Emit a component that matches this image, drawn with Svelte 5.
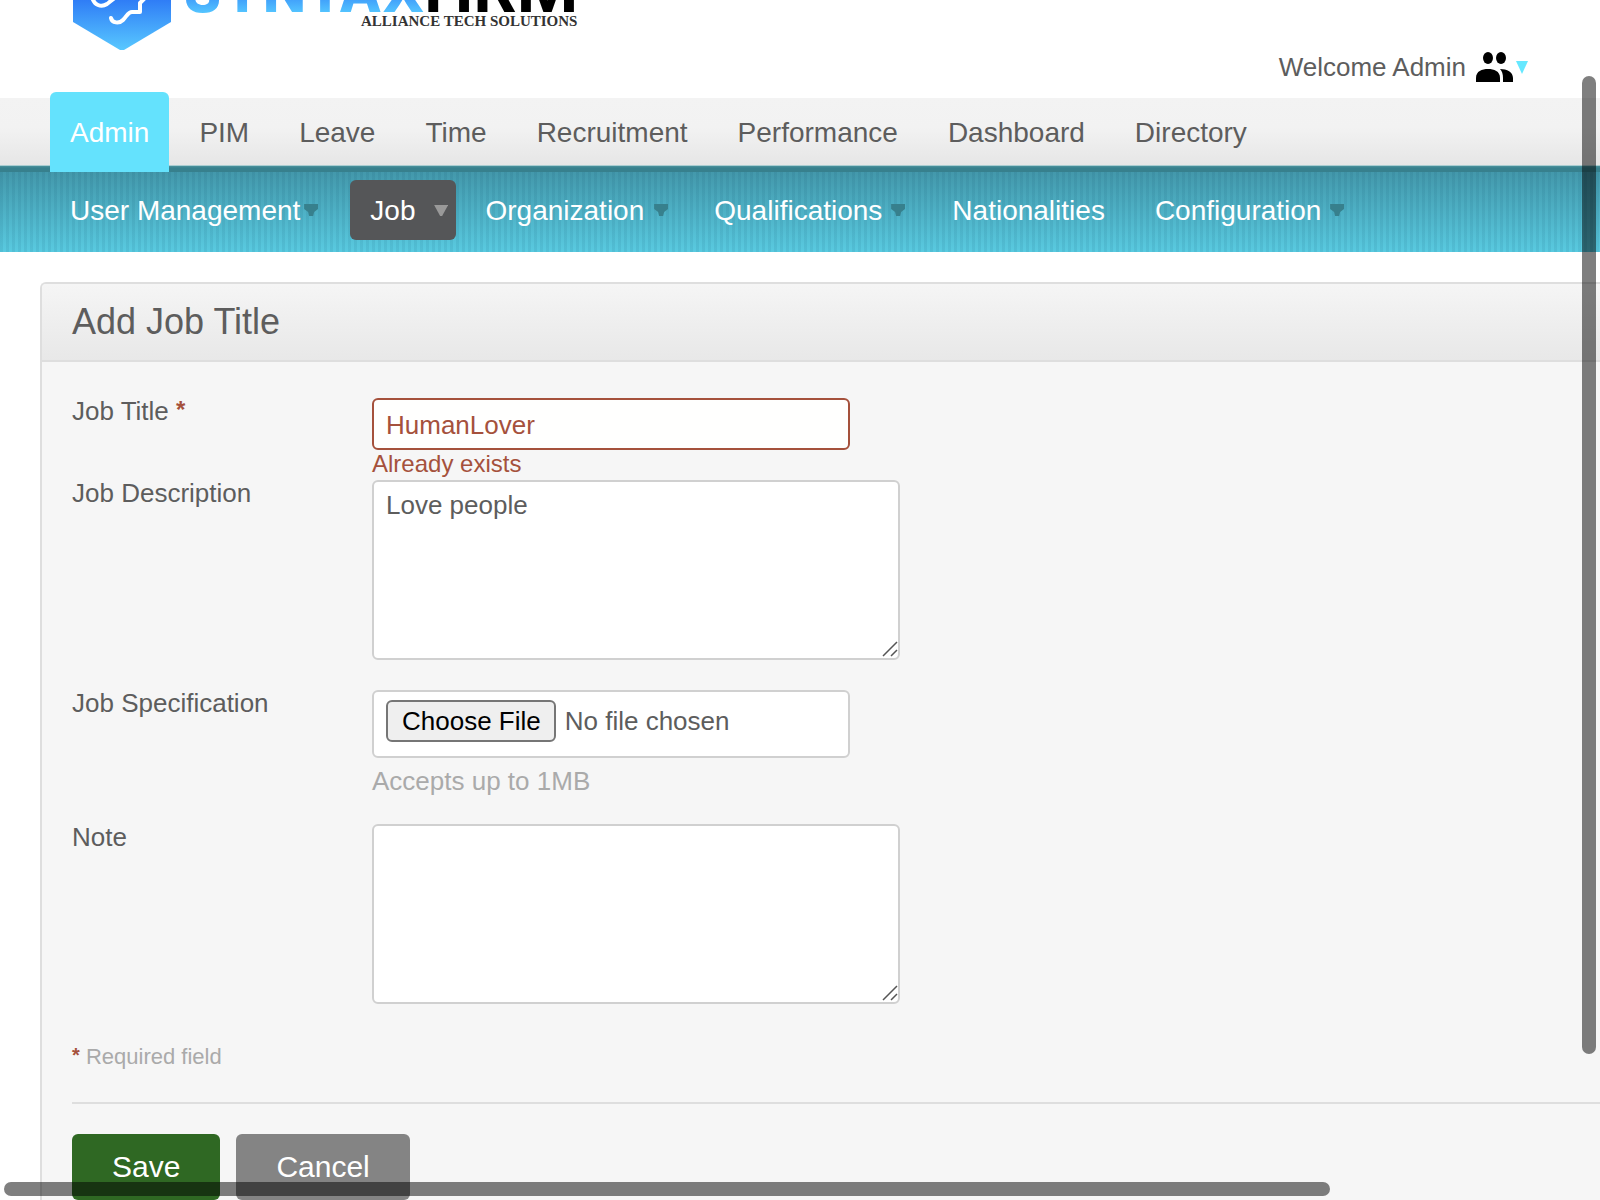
<script>
  const modules = ['Admin', 'PIM', 'Leave', 'Time', 'Recruitment', 'Performance', 'Dashboard', 'Directory'];
  const sections = [
    { name: 'User Management', menu: true },
    { name: 'Job', menu: true, current: true },
    { name: 'Organization', menu: true },
    { name: 'Qualifications', menu: true },
    { name: 'Nationalities' },
    { name: 'Configuration', menu: true }
  ];
  let title = $state('HumanLover');
  let description = $state('Love people');
  let note = $state('');
</script>

{#snippet grip()}
  <svg class="grip" viewBox="0 0 16 16" aria-hidden="true"><path d="M1 15L15 1M9 15L15 9" /></svg>
{/snippet}

<div class="page">
  <header>
    <svg class="logo" viewBox="0 0 540 52" role="img" aria-label="SyntaxHRM Alliance Tech Solutions">
      <defs>
        <linearGradient id="hex" gradientUnits="userSpaceOnUse" x1="0" y1="0" x2="0" y2="50">
          <stop offset="0" stop-color="#2f7df6" />
          <stop offset="1" stop-color="#58c8ff" />
        </linearGradient>
        <linearGradient id="word" gradientUnits="userSpaceOnUse" x1="0" y1="-14" x2="0" y2="12">
          <stop offset="0" stop-color="#2f7df6" />
          <stop offset="1" stop-color="#53c3ff" />
        </linearGradient>
      </defs>
      <path d="M1 -40H99V22L52 50H48L1 22Z" fill="url(#hex)" />
      <path d="M20 -3C22 5 29 8 35 4C39 1 42 -2 47 -5M39 18C40 23 47 24 51 20C55 16 56 12 60 12H68V3L75 -4" fill="none" stroke="#fff" stroke-width="4" stroke-linecap="round" stroke-linejoin="round" />
      <text x="112" y="12" class="word" fill="url(#word)">SYNTAX</text>
      <text x="352" y="12" class="word wide" fill="#000">HRM</text>
      <text x="289" y="26" class="tag">ALLIANCE TECH SOLUTIONS</text>
    </svg>
    <button class="welcome" type="button">
      Welcome Admin
      <svg class="people" viewBox="0 0 38 30" aria-hidden="true">
        <ellipse cx="12" cy="6" rx="5" ry="6" />
        <ellipse cx="25" cy="6" rx="5" ry="6" />
        <path d="M0 30V26C0 19 6 17 12 17S24 19 24 26V30Z" />
        <path d="M24 17C31 17 37 20 37 26V30H27V26C27 22 26 19 24 17Z" />
      </svg>
      <svg class="caret" viewBox="0 0 12 13" aria-hidden="true"><path d="M0 0H12L6 13Z" /></svg>
    </button>
  </header>

  <nav class="modules" aria-label="Modules">
    {#each modules as name, i}
      <a href="#{name}" class:active={i === 0}>{name}</a>
    {/each}
  </nav>

  <nav class="sections" aria-label="Admin sections">
    {#each sections as item}
      <a href="#{item.name}" class:menu={item.menu} class:current={item.current}>
        {item.name}
        {#if item.menu}
          <svg viewBox="0 0 14 12" aria-hidden="true">
            <path d={item.current ? 'M0 1H14L8 12H6Z' : 'M0 0H14V5L10 8L9 12H5L4 8L0 5Z'} />
          </svg>
        {/if}
      </a>
    {/each}
  </nav>

  <main>
    <h1>Add Job Title</h1>
    <form onsubmit={(e) => e.preventDefault()}>
      <div class="row first">
        <label for="title">Job Title <em>*</em></label>
        <div class="field">
          <input id="title" type="text" class="box invalid" bind:value={title} aria-invalid="true" aria-describedby="title-error" />
          <span id="title-error" class="error">Already exists</span>
        </div>
      </div>
      <div class="row">
        <label for="description">Job Description</label>
        <div class="field">
          <div class="area"><textarea id="description" class="box" bind:value={description}></textarea>{@render grip()}</div>
        </div>
      </div>
      <div class="row">
        <label for="spec">Job Specification</label>
        <div class="field">
          <input id="spec" type="file" class="box" />
          <span class="hint">Accepts up to 1MB</span>
        </div>
      </div>
      <div class="row">
        <label for="note">Note</label>
        <div class="field">
          <div class="area"><textarea id="note" class="box" bind:value={note}></textarea>{@render grip()}</div>
        </div>
      </div>
      <p class="required"><em>*</em> Required field</p>
      <div class="actions">
        <button type="submit" class="save">Save</button>
        <button type="button" class="cancel">Cancel</button>
      </div>
    </form>
  </main>

  <div class="thumb vertical"></div>
  <div class="thumb horizontal"></div>
</div>

<style>
  :global(body) {
    background: #fff;
  }
  .page {
    position: relative;
    min-height: 100vh;
    overflow: hidden;
    box-sizing: border-box;
    font-family: "Liberation Sans", Arial, sans-serif;
    color: #5d5d5d;
  }
  .page * {
    box-sizing: border-box;
  }
  header {
    display: flex;
    justify-content: space-between;
    align-items: flex-start;
    height: 98px;
    padding: 0 72px;
  }
  .logo {
    width: 540px;
    height: 52px;
  }
  .word {
    font: 800 56px Inter, sans-serif;
  }
  .wide {
    font-size: 66px;
    font-weight: 700;
  }
  .tag {
    font: bold 15px "Liberation Serif", serif;
    fill: #333;
  }
  .welcome {
    display: flex;
    align-items: center;
    margin-top: 52px;
    padding: 0;
    border: 0;
    background: none;
    font: 26px/30px "Liberation Sans", Arial, sans-serif;
    color: #5d5d5d;
  }
  .people {
    width: 38px;
    height: 30px;
    margin-left: 10px;
  }
  .caret {
    width: 12px;
    height: 13px;
    margin-left: 2px;
    fill: #66e8ff;
  }
  nav {
    display: flex;
    gap: 10px;
    padding: 0 50px;
    font-size: 28px;
  }
  nav a {
    padding: 0 20px;
    text-decoration: none;
    white-space: nowrap;
    color: #5d5d5d;
  }
  .modules {
    height: 74px;
    align-items: flex-end;
    background: linear-gradient(#f3f3f3 0, #f2f2f2 40%, #e6e6e6 67px, #a9cdd1 67px, #a9cdd1 68px, #4a929d 68px, #37808d 70px, #37808d 74px);
  }
  .modules a {
    height: 80px;
    line-height: 82px;
  }
  .modules .active {
    border-radius: 6px 6px 0 0;
    background: #64e2fd;
    color: #fff;
  }
  .sections {
    height: 80px;
    padding-top: 8px;
    background:
      repeating-linear-gradient(90deg, rgba(0, 60, 90, 0.08) 0 3px, transparent 3px 6px),
      linear-gradient(#4398ab, #59cae0);
  }
  .sections a {
    position: relative;
    height: 60px;
    line-height: 62px;
    border-radius: 6px;
    color: #fff;
  }
  .sections .menu {
    padding-right: 40px;
  }
  .sections .current {
    background: #555658;
  }
  .sections svg {
    position: absolute;
    top: 24px;
    left: 92%;
    width: 14px;
    height: 12px;
    transform: translateX(-92%);
    fill: #37808d;
  }
  .sections .current svg {
    fill: #999;
  }
  main {
    margin: 30px 0 0 40px;
    border: 2px solid #dedede;
    border-width: 2px 0 0 2px;
    border-radius: 6px 0 0 0;
    background: #f6f6f6;
  }
  h1 {
    margin: 0;
    padding: 0 30px;
    border-bottom: 2px solid #dedede;
    border-radius: 4px 0 0 0;
    background: linear-gradient(#f5f5f5, #e8e8e8);
    font-size: 36px;
    font-weight: normal;
    line-height: 76px;
  }
  form {
    padding: 36px 0 0 30px;
    font-size: 26px;
    line-height: 26px;
  }
  em {
    font-style: normal;
    font-weight: bold;
    line-height: 1;
    vertical-align: 2px;
    color: #a5513c;
  }
  label em {
    font-size: 24px;
  }
  .required em {
    font-size: 20px;
  }
  .row {
    display: grid;
    grid-template-columns: 300px 1fr;
    margin-bottom: 30px;
  }
  .first {
    margin-bottom: 0;
  }
  .field {
    display: flex;
    flex-direction: column;
    align-items: flex-start;
  }
  .box {
    width: 478px;
    max-width: 100%;
    margin: 0;
    padding: 8px 12px;
    border: 2px solid #d0d0d0;
    border-radius: 6px;
    background: #fff;
    font: 26px "Liberation Sans", Arial, sans-serif;
    color: #5d5d5d;
  }
  input[type="text"] {
    height: 52px;
    padding-top: 10px;
  }
  .invalid {
    border-color: #a5513c;
    background: #fffffe;
    color: #a5513c;
  }
  input[type="file"] {
    height: 68px;
  }
  input::file-selector-button {
    height: 42px;
    margin: 0 9px 0 0;
    padding: 0 13px 0 14px;
    border: 2px solid #767676;
    border-radius: 6px;
    background: #efefef;
    font: 26px "Liberation Sans", Arial, sans-serif;
    color: #000;
  }
  .area {
    position: relative;
    max-width: 100%;
  }
  textarea.box {
    display: block;
    width: 528px;
    height: 180px;
    resize: both;
  }
  textarea::-webkit-resizer {
    background: transparent;
  }
  .grip {
    position: absolute;
    right: 2px;
    bottom: 3px;
    width: 16px;
    height: 16px;
    fill: none;
    stroke: #555;
    stroke-width: 1.5;
    pointer-events: none;
  }
  .error {
    height: 30px;
    font-size: 24px;
    line-height: 28px;
    color: #a5513c;
  }
  .hint {
    padding-top: 10px;
    color: #aaa;
  }
  .required {
    margin: 12px 0 32px;
    padding-top: 10px;
    font-size: 22px;
    line-height: 26px;
    color: #aaa;
  }
  .actions {
    display: flex;
    gap: 16px;
    padding-top: 30px;
    border-top: 2px solid #dedede;
  }
  .actions button {
    height: 66px;
    padding: 0 40px;
    border: 0;
    border-radius: 6px;
    font: 30px "Liberation Sans", Arial, sans-serif;
    color: #fff;
  }
  .actions .save {
    background: #2f6823;
  }
  .actions .cancel {
    background: #848484;
  }
  .thumb {
    position: absolute;
    border-radius: 7px;
    background: rgba(0, 0, 0, 0.5);
  }
  .vertical {
    top: 76px;
    right: 4px;
    bottom: 146px;
    width: 14px;
  }
  .horizontal {
    right: 270px;
    bottom: 4px;
    left: 4px;
    height: 14px;
  }
</style>
